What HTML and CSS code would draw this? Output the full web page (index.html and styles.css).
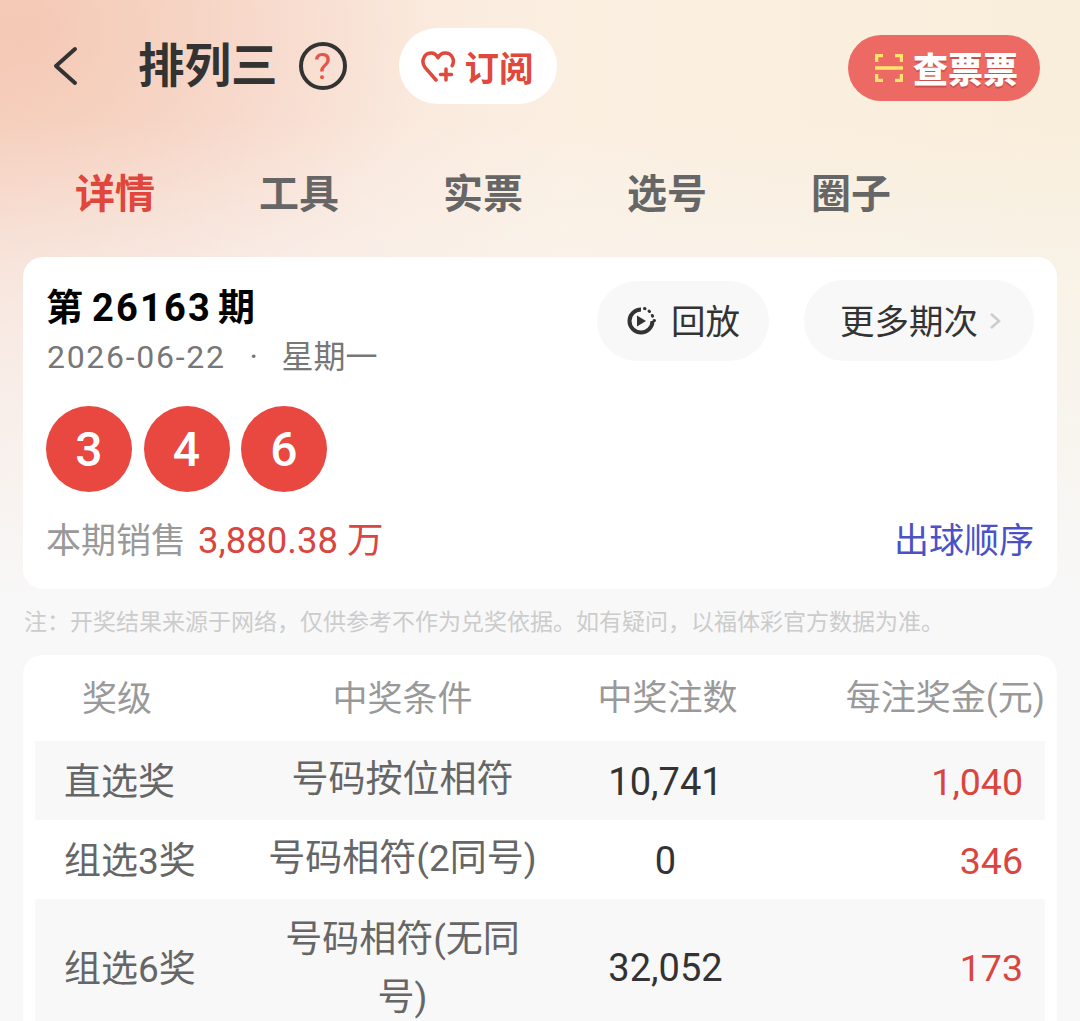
FILE: index.html
```html
<!DOCTYPE html>
<html lang="zh-CN">
<head>
<meta charset="utf-8">
<title>排列三</title>
<link rel="stylesheet" href="styles.css">
</head>
<body>
<div class="page">
  <header class="topbar">
    <svg class="back" viewBox="0 0 26 40" aria-hidden="true"><path d="M23 3 4 20l19 17" /></svg>
    <h1 class="title">排列三</h1>
    <div class="help">?</div>
    <div class="subscribe">
      <svg class="heart" viewBox="0 0 36 34" aria-hidden="true">
        <path class="heart-line" d="M15 31 4.200 18.600C-.6 12.600 3 4 10 4c3.300 0 5.600 1.900 7 4.800C18.400 5.900 20.800 4 24.200 4c6.800 0 10 7.200 7 12.600" />
        <path class="heart-line" d="M25 20v11M19.500 25.500h11" />
      </svg>
      <span>订阅</span>
    </div>
    <div class="check">
      <svg class="scan" viewBox="0 0 28 28" aria-hidden="true">
        <path d="M8 1.500H1.500V8M20 1.500h6.500V8M8 26.500H1.500V20M20 26.500h6.500V20M0 14h28" />
      </svg>
      <span>查票票</span>
    </div>
  </header>

  <nav class="tabs">
    <span class="tab active">详情</span>
    <span class="tab">工具</span>
    <span class="tab">实票</span>
    <span class="tab">选号</span>
    <span class="tab">圈子</span>
  </nav>

  <section class="card draw">
    <div class="draw-top">
      <div>
        <div class="issue">第<span class="issue-num">26163</span>期</div>
        <div class="date"><span class="date-num">2026-06-22</span><span class="dot">·</span><span>星期一</span></div>
      </div>
      <div class="actions">
        <div class="pill replay">
          <svg class="replay-icon" viewBox="0 0 30 30" aria-hidden="true">
            <path class="ring" d="M15 3.500A11.500 11.500 0 1 0 26.500 15" />
            <path class="ticks" d="M18.500 2.500l.5.200M23 5l.5.500M26.300 9.500l.3.700M28 14.500h.5" />
            <path class="play" d="M11 9.500 20 15l-9 5.500z" />
          </svg>
          <span class="pill-text">回放</span>
        </div>
        <div class="pill more">
          <span class="pill-text">更多期次</span>
          <svg class="chev" viewBox="0 0 12 18" aria-hidden="true"><path d="M2 2l8 7-8 7" /></svg>
        </div>
      </div>
    </div>
    <div class="balls">
      <span class="ball">3</span>
      <span class="ball">4</span>
      <span class="ball">6</span>
    </div>
    <div class="sales">
      <span class="sales-label">本期销售</span>
      <span class="sales-value">3,880.38 万</span>
      <span class="order">出球顺序</span>
    </div>
  </section>

  <p class="note">注：开奖结果来源于网络，仅供参考不作为兑奖依据。如有疑问，以福体彩官方数据为准。</p>

  <section class="card prizes">
    <div class="row head">
      <div class="c1">奖级</div>
      <div class="c2">中奖条件</div>
      <div class="c3">中奖注数</div>
      <div class="c4">每注奖金(元)</div>
    </div>
    <div class="row shade">
      <div class="c1">直选奖</div>
      <div class="c2">号码按位相符</div>
      <div class="c3">10,741</div>
      <div class="c4">1,040</div>
    </div>
    <div class="row">
      <div class="c1">组选3奖</div>
      <div class="c2">号码相符(2同号)</div>
      <div class="c3">0</div>
      <div class="c4">346</div>
    </div>
    <div class="row shade tall">
      <div class="c1">组选6奖</div>
      <div class="c2">号码相符(无同号)</div>
      <div class="c3">32,052</div>
      <div class="c4">173</div>
    </div>
  </section>
</div>
</body>
</html>
```

FILE: styles.css
```css
* { box-sizing: border-box; }
html, body {
  margin: 0;
  height: 1021px;
  overflow: hidden;
}
body {
  background: #f8f8f8;
  font-family: "Roboto", "Noto Sans CJK SC", sans-serif;
  color: #333;
}
.page {
  height: 1021px;
  overflow: hidden;
  padding: 28px 23px 0;
  background:
    linear-gradient(to bottom, rgba(248,248,248,0) 0, rgba(248,248,248,0) 120px, rgba(248,248,248,.42) 280px, #f8f8f8 600px) no-repeat,
    radial-gradient(ellipse 420px 300px at 20px 30px, rgba(241,184,158,.55) 0, rgba(241,184,158,0) 100%) no-repeat,
    linear-gradient(to right, #f8dccf 0, #f9e5db 280px, #fbefe1 560px, #f9eedb 1080px) no-repeat;
}

/* top bar */
.topbar {
  display: flex;
  align-items: center;
  height: 76px;
  padding-left: 29px;
  margin-right: -6px;
  padding-right: 23px;
}
.back { width: 26px; height: 40px; }
.back path { fill: none; stroke: #333; stroke-width: 4; stroke-linecap: round; stroke-linejoin: round; }
.title {
  margin: 0 0 0 60px;
  font-size: 46.5px;
  line-height: 60px;
  font-weight: 700;
  color: #333;
}
.help {
  margin-left: 21px;
  width: 48px;
  height: 48px;
  border: 4px solid #333;
  border-radius: 50%;
  display: flex;
  align-items: center;
  justify-content: center;
  color: #e0574e;
  font-size: 37px;
  line-height: 1;
}
.subscribe {
  margin-left: 52px;
  width: 158px;
  height: 76px;
  border-radius: 38px;
  background: #fff;
  display: flex;
  align-items: center;
  padding-left: 22px;
  gap: 8px;
  color: #e0483e;
  font-size: 34.5px;
  font-weight: 700;
}
.heart { width: 36px; height: 34px; flex: none; }
.heart-line { fill: none; stroke: #e0483e; stroke-width: 3.5; stroke-linecap: round; stroke-linejoin: round; }
.check {
  margin-left: auto;
  margin-top: 3px;
  width: 192px;
  height: 66px;
  border-radius: 33px;
  background: #ec6a63;
  display: flex;
  align-items: center;
  padding-left: 27px;
  gap: 10px;
  color: #fff;
  font-size: 35px;
  font-weight: 900;
  text-shadow: 0 2px 0 #c9524c;
}
.scan { width: 28px; height: 28px; flex: none; }
.scan path { fill: none; stroke: #ffe36e; stroke-width: 3.5; }

/* tabs */
.tabs {
  display: flex;
  gap: 104px;
  margin-top: 66px;
  padding-left: 52px;
}
.tab {
  font-size: 40px;
  line-height: 50px;
  font-weight: 700;
  color: #666;
}
.tab.active { color: #e0463c; }

/* cards */
.card {
  background: #fff;
  border-radius: 20px;
}
.draw {
  margin-top: 37px;
  padding: 26px 23px 26px 24px;
}
.draw-top {
  display: flex;
  justify-content: space-between;
  align-items: flex-start;
}
.issue {
  height: 50px;
  font-size: 37px;
  line-height: 50px;
  font-weight: 700;
  color: #000;
  margin-left: -1px;
}
.issue-num {
  font-size: 38px;
  letter-spacing: 2.2px;
  margin: 0 6px 0 9px;
}
.date {
  display: flex;
  height: 48px;
  font-size: 32px;
  line-height: 48px;
  color: #777;
}
.date-num { letter-spacing: 1.7px; }
.dot { width: 56px; text-align: center; }
.actions {
  display: flex;
  align-items: flex-end;
  gap: 35px;
  margin-top: -3px;
}
.pill {
  height: 80px;
  border-radius: 40px;
  background: #f8f8f8;
  display: flex;
  align-items: center;
  font-size: 34.5px;
  color: #333;
}
.pill-text { padding-bottom: 4px; }
.replay { width: 172px; padding-left: 29px; gap: 15px; }
.replay-icon { width: 30px; height: 30px; flex: none; }
.ring { fill: none; stroke: #333; stroke-width: 4; }
.ticks { fill: none; stroke: #333; stroke-width: 3; stroke-linecap: round; }
.play { fill: #333; }
.more { width: 230px; height: 81px; padding-left: 36px; gap: 11px; }
.chev { width: 12px; height: 18px; flex: none; }
.chev path { fill: none; stroke: #ccc; stroke-width: 2.5; }
.balls {
  display: flex;
  gap: 11.5px;
  margin-top: 25px;
  margin-left: -1px;
}
.ball {
  width: 86px;
  height: 86px;
  border-radius: 50%;
  background: #e8483f;
  color: #fff;
  font-size: 48px;
  font-weight: 500;
  display: flex;
  align-items: center;
  justify-content: center;
}
.sales {
  display: flex;
  align-items: center;
  margin-top: 25px;
  height: 46px;
  padding-bottom: 6px;
  font-size: 35px;
}
.sales-label { color: #999; margin-left: -1px; }
.sales-value { color: #d9463f; margin-left: 12px; font-size: 36.5px; }
.order { margin-left: auto; color: #4a52c6; }

.note {
  margin: 17px 0 0 1px;
  font-size: 23px;
  line-height: 34px;
  color: #ccc;
  white-space: nowrap;
}

/* prize table */
.prizes {
  margin-top: 15px;
  padding: 0 12px;
  height: 366px;
  overflow: hidden;
  border-radius: 20px 20px 0 0;
}
.row {
  display: grid;
  grid-template-columns: 230px 275px 255px 250px;
  align-items: center;
  height: 79px;
  font-size: 37px;
  color: #666;
}
.row.shade { background: #f8f8f8; }
.row.tall { height: 136px; }
.row.head { height: 86px; font-size: 35px; color: #999; }
.c1 { padding-left: 29px; padding-bottom: 3px; }
.head .c1 { padding-left: 47px; padding-bottom: 5px; }
.c2, .c3 { text-align: center; }
.c2 { line-height: 58px; padding-bottom: 2px; }
.tall .c2 { padding-bottom: 0; padding-top: 4px; }
.head .c2 { padding-bottom: 0; padding-top: 4px; }
.c3 { color: #333; font-size: 38px; padding-right: 4px; padding-top: 2px; }
.c4 { text-align: right; padding: 2px 22px 0 0; color: #d9463f; font-size: 37.5px; }
.head .c3 { color: #999; font-size: 35px; padding: 0 0 7px; }
.head .c4 { padding: 0 0 7px; color: #999; font-size: 35px; white-space: nowrap; }
```
